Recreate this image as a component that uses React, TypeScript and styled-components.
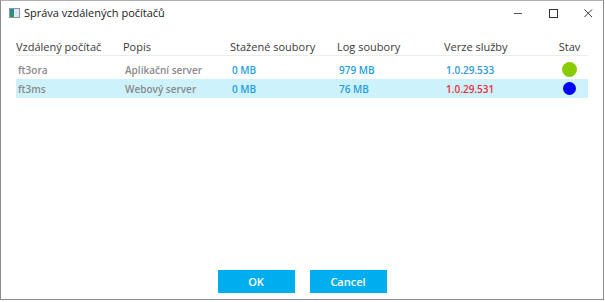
import React from "react";
import styled, { createGlobalStyle } from "styled-components";

const Global = createGlobalStyle`
  html, body { margin: 0; padding: 0; background: #ffffff; }
  * { box-sizing: border-box; }
`;

const Window = styled.div`
  width: 604px;
  height: 300px;
  border: 1px solid #8c8c8c;
  border-top-color: #b0b0b0;
  background: #ffffff;
  display: flex;
  flex-direction: column;
  font-family: "Open Sans", "Noto Sans", sans-serif;
`;

const TitleBar = styled.div`
  height: 23px;
  display: flex;
  align-items: center;
  padding-left: 8px;
`;

const TitleText = styled.span`
  margin-left: 4px;
  font-size: 11px;
  color: #1a1a1a;
  flex: 1;
  line-height: 1;
`;

const Controls = styled.div`
  display: flex;
  height: 100%;
  margin-right: -2px;
`;

const ControlButton = styled.div`
  width: 35px;
  height: 100%;
  display: flex;
  align-items: center;
  justify-content: center;
`;

const Content = styled.div`
  flex: 1;
  padding: 13px 14px 0 15px;
`;

const Grid = styled.div`
  display: grid;
  grid-template-columns: 107px 107px 107px 107px 107px 37px;
`;

const HeaderRow = styled.div`
  display: contents;
`;

const HeaderCell = styled.div<{ $center?: boolean }>`
  height: 19px;
  border-bottom: 1px solid #ececec;
  font-size: 11px;
  color: #3a3a3a;
  display: flex;
  align-items: center;
  justify-content: ${(p) => (p.$center ? "center" : "flex-start")};
  white-space: nowrap;
  margin-bottom: 4px;
`;

const Row = styled.div<{ $selected?: boolean }>`
  display: contents;
  & > div {
    background: ${(p) => (p.$selected ? "#cdf2fb" : "transparent")};
  }
`;

const Cell = styled.div<{ $color?: string; $center?: boolean }>`
  height: 19px;
  display: flex;
  align-items: center;
  justify-content: ${(p) => (p.$center ? "center" : "flex-start")};
  padding-left: ${(p) => (p.$center ? "0" : "2px")};
  font-size: 10px;
  font-weight: 600;
  color: ${(p) => p.$color || "#8a8a8a"};
  white-space: nowrap;
`;

const Dot = styled.span<{ $color: string; $size: number }>`
  display: block;
  width: ${(p) => p.$size}px;
  height: ${(p) => p.$size}px;
  border-radius: 50%;
  background: ${(p) => p.$color};
`;

const Footer = styled.div`
  display: flex;
  justify-content: center;
  gap: 15px;
  padding-bottom: 6px;
`;

const Button = styled.button`
  width: 77px;
  height: 23px;
  border: none;
  background: #00aeef;
  color: #ffffff;
  font-family: "Open Sans", "Noto Sans", sans-serif;
  font-size: 11px;
  font-weight: 600;
  padding: 0;
  cursor: pointer;
`;

const AppIcon = () => (
  <svg width="11" height="10" viewBox="0 0 11 10">
    <defs>
      <linearGradient id="ai" x1="0" y1="0" x2="0" y2="1">
        <stop offset="0" stopColor="#2f7fb5" />
        <stop offset="1" stopColor="#2f9a5a" />
      </linearGradient>
    </defs>
    <rect x="0.5" y="0.5" width="10" height="9" fill="#dfe8ef" stroke="#8a96a3" />
    <rect x="1" y="1" width="4" height="8" fill="url(#ai)" />
  </svg>
);

const MinIcon = () => (
  <svg width="10" height="10" viewBox="0 0 10 10">
    <line x1="1" y1="5.5" x2="9" y2="5.5" stroke="#555" strokeWidth="1" />
  </svg>
);

const MaxIcon = () => (
  <svg width="10" height="10" viewBox="0 0 10 10">
    <rect x="1.5" y="1.5" width="8" height="8" fill="none" stroke="#333" strokeWidth="1" />
  </svg>
);

const CloseIcon = () => (
  <svg width="10" height="10" viewBox="0 0 10 10">
    <path d="M1.5 1.5 L9 9 M9 1.5 L1.5 9" stroke="#333" strokeWidth="1" />
  </svg>
);

const rows = [
  { name: "ft3ora", desc: "Aplikační server", dl: "0 MB", log: "979 MB", ver: "1.0.29.533", verColor: "#2b98d8", dot: "#88cc00", size: 15, selected: false },
  { name: "ft3ms", desc: "Webový server", dl: "0 MB", log: "76 MB", ver: "1.0.29.531", verColor: "#ec2f3c", dot: "#0000ff", size: 13, selected: true },
];

export default function App() {
  return (
    <>
      <Global />
      <Window>
        <TitleBar>
          <AppIcon />
          <TitleText>Správa vzdálených počítačů</TitleText>
          <Controls>
            <ControlButton><MinIcon /></ControlButton>
            <ControlButton><MaxIcon /></ControlButton>
            <ControlButton><CloseIcon /></ControlButton>
          </Controls>
        </TitleBar>
        <Content>
          <Grid>
            <HeaderRow>
              <HeaderCell>Vzdálený počítač</HeaderCell>
              <HeaderCell>Popis</HeaderCell>
              <HeaderCell>Stažené soubory</HeaderCell>
              <HeaderCell>Log soubory</HeaderCell>
              <HeaderCell>Verze služby</HeaderCell>
              <HeaderCell $center>Stav</HeaderCell>
            </HeaderRow>
            {rows.map((r) => (
              <Row key={r.name} $selected={r.selected}>
                <Cell>{r.name}</Cell>
                <Cell>{r.desc}</Cell>
                <Cell $color="#1e9fe2">{r.dl}</Cell>
                <Cell $color="#1e9fe2">{r.log}</Cell>
                <Cell $color={r.verColor}>{r.ver}</Cell>
                <Cell $center><Dot $color={r.dot} $size={r.size} /></Cell>
              </Row>
            ))}
          </Grid>
        </Content>
        <Footer>
          <Button>OK</Button>
          <Button>Cancel</Button>
        </Footer>
      </Window>
    </>
  );
}
